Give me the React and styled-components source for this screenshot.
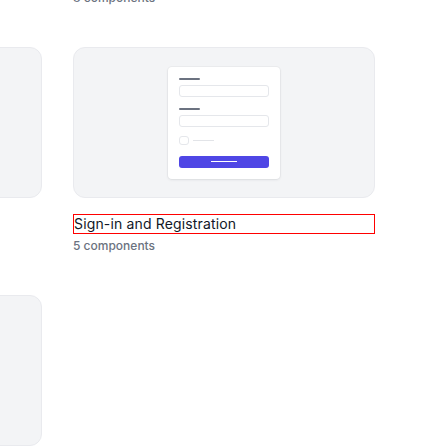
import React from 'react';
import styled, { createGlobalStyle } from 'styled-components';

const GlobalStyle = createGlobalStyle`
  html, body {
    margin: 0;
    padding: 0;
    background: #ffffff;
    font-family: Inter, "Liberation Sans", sans-serif;
  }
  #root {
    width: 448px;
    height: 448px;
    overflow: hidden;
  }
`

const Viewport = styled.div`
  width: 448px;
  height: 448px;
  overflow: hidden;
`

const Grid = styled.div`
  display: grid;
  grid-template-columns: repeat(2, 302px);
  column-gap: 31px;
  row-gap: 41px;
  margin-left: -260px;
  margin-top: -201px;
`

const Item = styled.div`
  display: flex;
  flex-direction: column;
`

const Preview = styled.div`
  height: 151px;
  box-sizing: border-box;
  border: 1px solid #e9eaee;
  border-radius: 12px;
  background: #f3f4f6;
  display: flex;
  align-items: center;
  justify-content: center;
`

const Title = styled.div`
  margin-top: 16px;
  height: 20px;
  box-sizing: border-box;
  border: 1px solid ${p => p.$selected ? '#ff0000' : 'transparent'};
  font-size: 14px;
  letter-spacing: 0.15px;
  line-height: 18px;
  color: #111827;
  white-space: nowrap;
`

const Count = styled.div`
  margin-top: 4px;
  font-size: 12px;
  line-height: 16px;
  font-weight: 500;
  color: #6b7280;
`

/* miniature of a login form */
const Form = styled.div`
  width: 112px;
  height: 112px;
  box-sizing: border-box;
  padding: 11px;
  background: #ffffff;
  border-radius: 4px;
  box-shadow: 0 1px 3px rgba(17, 24, 39, 0.08), 0 0 0 1px rgba(17, 24, 39, 0.03);
  display: flex;
  flex-direction: column;
`

const Label = styled.div`
  width: 21px;
  height: 2px;
  border-radius: 1px;
  background: #6b7280;
  margin-top: ${p => p.$first ? '0' : '11px'};
`

const Input = styled.div`
  margin-top: 5px;
  height: 12px;
  box-sizing: border-box;
  border: 1px solid #e5e7eb;
  border-radius: 3px;
`

const CheckRow = styled.div`
  margin-top: 9px;
  display: flex;
  align-items: center;
  gap: 4px;
`

const Box = styled.div`
  width: 10px;
  height: 9px;
  box-sizing: border-box;
  border: 1px solid #e5e7eb;
  border-radius: 3px;
`

const CheckText = styled.div`
  width: 21px;
  height: 1px;
  background: #e2e4e8;
`

const Button = styled.div`
  margin-top: 11px;
  height: 12px;
  border-radius: 3px;
  background: #4f46e5;
  display: flex;
  align-items: center;
  justify-content: center;
`

const ButtonText = styled.div`
  width: 26px;
  height: 1.5px;
  background: #ffffff;
`

const LoginPreview = () => (
  <Form>
    <Label $first />
    <Input />
    <Label />
    <Input />
    <CheckRow>
      <Box />
      <CheckText />
    </CheckRow>
    <Button>
      <ButtonText />
    </Button>
  </Form>
)

const items = [
  { title: 'Page Sections', count: 8 },
  { title: 'Page Headers', count: 8 },
  { title: 'Stats', count: 6 },
  { title: 'Sign-in and Registration', count: 5, preview: true, selected: true },
  { title: 'Feeds', count: 3 },
]

const App = () => (
  <Viewport>
    <GlobalStyle />
    <Grid>
      {items.map(item => (
        <Item key={item.title}>
          <Preview>{item.preview ? <LoginPreview /> : null}</Preview>
          <Title $selected={item.selected}>{item.title}</Title>
          <Count>{item.count} components</Count>
        </Item>
      ))}
    </Grid>
  </Viewport>
)

export default App;
